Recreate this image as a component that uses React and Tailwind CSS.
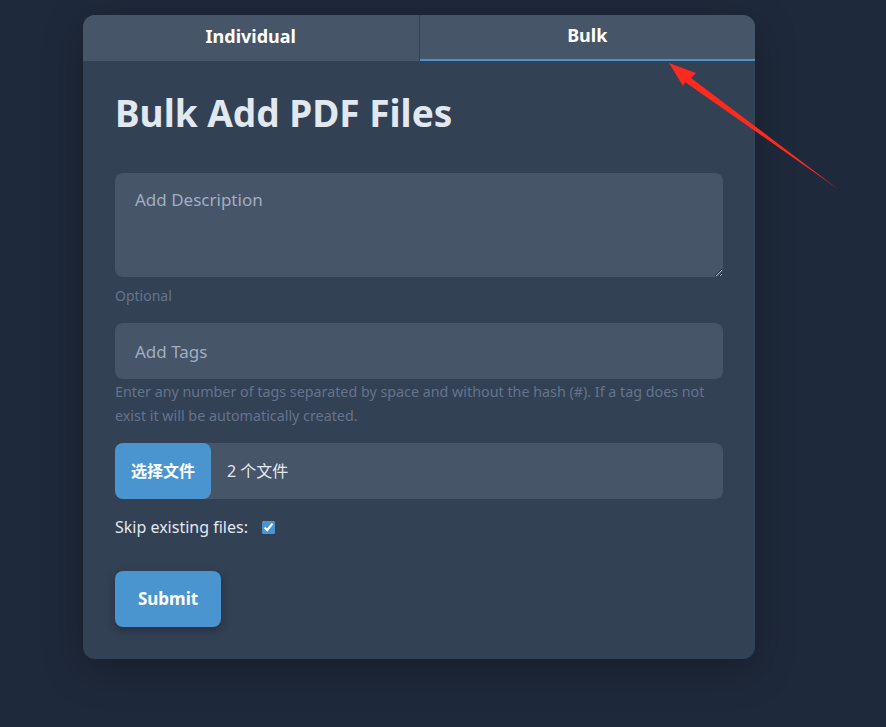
import React, { useState } from "react";

const font = { fontFamily: '"Noto Sans", "Noto Sans CJK SC", sans-serif' };

const Tabs = ({ active, onChange }) => (
  <div className="flex h-[46px] bg-[#475569] rounded-t-xl overflow-hidden">
    {["Individual", "Bulk"].map((name, i) => (
      <button
        key={name}
        onClick={() => onChange(name)}
        className={`flex-1 pb-[3px] text-[18px] font-bold text-white ${
          i === 0 ? "border-r border-[#334155]" : ""
        } ${active === name ? "border-b-2 border-b-[#4a95d0]" : ""}`}
      >
        {name}
      </button>
    ))}
  </div>
);

const BulkForm = () => {
  const [skip, setSkip] = useState(true);

  return (
    <form className="px-8 pt-[30px] pb-8" onSubmit={(e) => e.preventDefault()}>
      <h1 className="text-[37px] leading-[44px] font-bold text-[#e2e8f0]">
        Bulk Add PDF Files
      </h1>

      <div className="mt-[38px]">
        <textarea
          placeholder="Add Description"
          className="block w-full h-[104px] rounded-lg bg-[#475569] px-5 py-[14px] text-[17px] text-[#e2e8f0] placeholder:text-[#a0aec0] outline-none"
        />
        <p className="mt-[8px] text-[14px] leading-[22px] text-[#64748b]">Optional</p>
      </div>

      <div className="mt-[16px]">
        <input
          type="text"
          placeholder="Add Tags"
          className="block w-full h-14 rounded-lg bg-[#475569] px-5 text-[17px] text-[#e2e8f0] placeholder:text-[#a0aec0] outline-none"
        />
        <p className="mt-[1px] text-[14.3px] leading-6 text-[#64748b]">
          Enter any number of tags separated by space and without the hash (#). If a tag does not
          exist it will be automatically created.
        </p>
      </div>

      <div className="mt-[15px] flex h-14 items-center rounded-lg bg-[#475569]">
        <span className="flex h-full w-[96px] items-center justify-center rounded-lg bg-[#4a95d0] text-[16px] font-bold text-white">
          选择文件
        </span>
        <span className="ml-4 text-[16px] text-[#e2e8f0]">2 个文件</span>
      </div>

      <label className="mt-[16px] flex items-center gap-[14px] text-[16px] text-[#e2e8f0]">
        Skip existing files:
        <input
          type="checkbox"
          checked={skip}
          onChange={() => setSkip(!skip)}
          className="h-[13px] w-[13px] accent-[#4a95d0]"
        />
      </label>

      <button
        type="submit"
        className="mt-[32px] h-14 w-[106px] rounded-lg bg-[#4a95d0] text-[17px] font-bold text-white shadow-[0_4px_10px_rgba(0,0,0,0.25)]"
      >
        Submit
      </button>
    </form>
  );
};

export default function App() {
  const [tab, setTab] = useState("Bulk");

  return (
    <div className="relative min-h-screen bg-[#1e293b] pt-[15px] pl-[83px]" style={font}>
      <div className="w-[672px] rounded-xl bg-[#334155] shadow-[0_10px_40px_rgba(0,0,0,0.25)]">
        <Tabs active={tab} onChange={setTab} />
        <BulkForm />
      </div>

      {/* red pointer arrow */}
      <svg className="absolute left-0 top-0 pointer-events-none" width="886" height="727">
        <polygon points="669,63 696,73 691,78 838,189 685,82 683,86" fill="#ff2a1f" />
      </svg>
    </div>
  );
}
